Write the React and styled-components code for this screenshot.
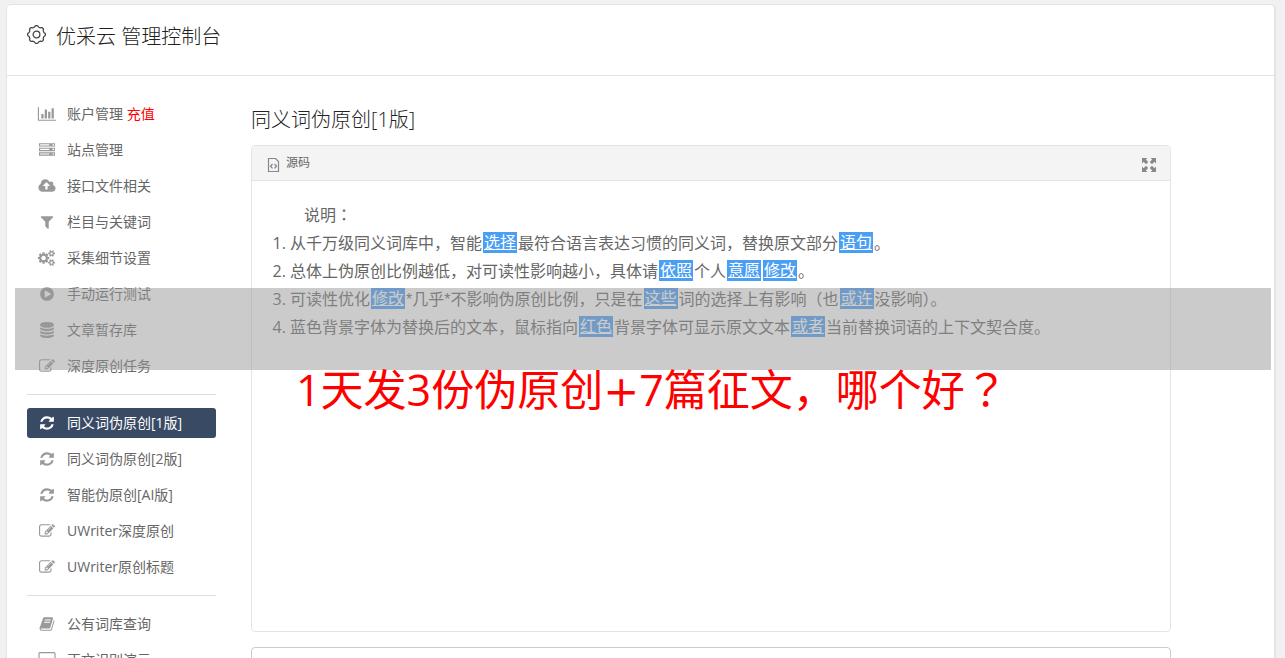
import React from 'react';
import styled, { createGlobalStyle, css } from 'styled-components';

const GlobalStyle = createGlobalStyle`
  * { box-sizing: border-box; }
  body {
    margin: 0;
    background: #f1f1f1;
    color: #666;
    font-family: "Open Sans", "Noto Sans CJK SC", sans-serif;
    font-size: 14px;
  }
`;

const Page = styled.div`
  position: relative;
  height: 100vh;
  overflow: hidden;
  padding: 4px 9px 0 6px;
`;

const Card = styled.div`
  min-height: 100vh;
  background: #fff;
  border: 1px solid #e4e4e4;
  border-right-width: 2px;
  border-radius: 5px;
`;

const Header = styled.header`
  display: flex;
  align-items: flex-start;
  gap: 10px;
  height: 71px;
  padding: 16px 20px 0;
  border-bottom: 1px solid #e4e4e4;

  svg { margin-top: 4px; }
`;

const Brand = styled.h1`
  margin: 0;
  font-size: 20px;
  font-weight: 300;
  line-height: 32px;
  color: #222;
`;

const Columns = styled.div`
  display: flex;
  align-items: flex-start;
  gap: 35px;
  padding: 23px 20px 0;
`;

const Sidebar = styled.nav`
  flex: 0 0 189px;
`;

const Group = styled.ul`
  display: flex;
  flex-direction: column;
  gap: 6px;
  margin: 0;
  padding: 0 0 13px;
  list-style: none;

  & + & {
    padding-top: 13px;
    border-top: 1px solid #ddd;
  }
`;

const NavLink = styled.a`
  display: flex;
  align-items: center;
  gap: 10px;
  height: 30px;
  padding: 0 10px;
  border-radius: 3px;
  color: #666;
  line-height: 30px;
  text-decoration: none;
  white-space: nowrap;

  svg { flex: none; color: #999; }

  ${({ $active }) => $active && css`
    background: #394a65;
    color: #fff;
    svg { color: #fff; }
  `}
`;

const Recharge = styled.span`
  color: #f00;
`;

const Main = styled.main`
  flex: 1;
  min-width: 0;
  max-width: 920px;
`;

const Title = styled.h2`
  margin: 5px 0 9px;
  font-size: 20px;
  font-weight: 300;
  line-height: 32px;
  color: #222;
`;

const Panel = styled.section`
  border: 1px solid #e4e4e4;
  border-radius: 4px;
  margin-bottom: 15px;
`;

const Toolbar = styled.div`
  display: flex;
  align-items: center;
  justify-content: space-between;
  height: 35px;
  padding: 0 13px 0 15px;
  background: #f4f4f4;
  border-bottom: 1px solid #e4e4e4;
  border-radius: 3px 3px 0 0;
`;

const ToolButton = styled.button`
  display: flex;
  align-items: center;
  gap: 6px;
  padding: 0;
  border: 0;
  background: none;
  color: #666;
  font: inherit;
  font-size: 12px;
  line-height: 18px;

  svg { color: #888; margin-top: 3px; }
`;

const Editor = styled.div`
  min-height: 450px;
  padding: 20px;
  font-size: 16px;
  line-height: 28px;
`;

const Lead = styled.p`
  margin: 0;
  text-indent: 2em;
`;

const Notes = styled.ol`
  margin: 0;
  padding-left: 18px;
`;

const fonts = {
  star: '"Liberation Sans", sans-serif',
  plus: '"DejaVu Sans", sans-serif',
  mark: '"Noto Sans CJK JP", sans-serif',
};

const Sign = styled.span`
  font-family: ${({ $kind }) => fonts[$kind]};
  line-height: 1;
`;

const Mark = styled.span`
  display: inline-block;
  height: 21px;
  margin: 3px 1px 0;
  padding: 0 1px;
  background: #4a9ff5;
  color: #fff;
  line-height: 21px;
  text-decoration: underline;
  vertical-align: top;
`;

const Output = styled.textarea`
  display: block;
  width: 100%;
  height: 120px;
  padding: 10px;
  border: 1px solid #ccc;
  border-radius: 4px;
  resize: none;
`;

const Shade = styled.div`
  position: absolute;
  top: 288px;
  left: 15px;
  right: 14px;
  height: 82px;
  background: rgba(151, 151, 151, 0.5);
  pointer-events: none;
`;

const Caption = styled.p`
  position: absolute;
  top: 360px;
  left: 296px;
  margin: 0;
  color: #f00;
  font-size: 43px;
  line-height: 60px;
  white-space: nowrap;
`;

const glyphs = {
  chart: [2048, 'M640 896v512h-256v-512h256zm384-512v1024h-256v-1024h256zm1024 1152v128h-2048v-1536h128v1408h1920zm-640-896v768h-256v-768h256zm384-384v1152h-256v-1152h256z'],
  server: [1792, 'M128 1408h1024v-128h-1024v128zm0-512h1024v-128h-1024v128zm1568 448q0-40-28-68t-68-28-68 28-28 68 28 68 68 28 68-28 28-68zm-1568-960h1024v-128h-1024v128zm1568 448q0-40-28-68t-68-28-68 28-28 68 28 68 68 28 68-28 28-68zm0-512q0-40-28-68t-68-28-68 28-28 68 28 68 68 28 68-28 28-68zm96 832v384h-1792v-384h1792zm0-512v384h-1792v-384h1792zm0-512v384h-1792v-384h1792z'],
  upload: [1920, 'M1280 864q0-14-9-23l-352-352q-9-9-23-9t-23 9l-351 351q-10 12-10 24 0 14 9 23t23 9h224v352q0 13 9.5 22.5t22.5 9.5h192q13 0 22.5-9.5t9.5-22.5v-352h224q13 0 22.5-9.5t9.5-22.5zm640 288q0 159-112.5 271.5t-271.5 112.5h-1088q-185 0-316.5-131.5t-131.5-316.5q0-130 70-240t188-165q-2-30-2-43 0-212 150-362t362-150q156 0 285.5 87t188.5 231q71-62 166-62 106 0 181 75t75 181q0 76-41 138 130 31 213.5 135.5t83.5 238.5z'],
  filter: [1792, 'M1595 295q17 41-14 70l-493 493v742q0 42-39 59-13 5-25 5-27 0-45-19l-256-256q-19-19-19-45v-486l-493-493q-31-29-14-70 17-39 59-39h1280q42 0 59 39z'],
  cogs: [1920, 'M832 896q0-106-75-181t-181-75-181 75-75 181 75 181 181 75 181-75 75-181zm768 512q0-52-38-90t-90-38-90 38-38 90q0 53 37.5 90.5t90.5 37.5 90.5-37.5 37.5-90.5zm0-1024q0-52-38-90t-90-38-90 38-38 90q0 53 37.5 90.5t90.5 37.5 90.5-37.5 37.5-90.5zm-384 421v185q0 10-7 19.5t-16 10.5l-155 24q-11 35-32 76 34 48 90 115 7 11 7 20 0 12-7 19-23 30-82.5 89.5t-78.5 59.5q-11 0-21-7l-115-90q-37 19-77 31-11 108-23 155-7 24-30 24h-186q-11 0-20-7.5t-10-17.5l-23-153q-34-10-75-31l-118 89q-7 7-20 7-11 0-21-8-144-133-144-160 0-9 7-19 10-14 41-53t47-61q-23-44-35-82l-152-24q-10-1-17-9.5t-7-19.5v-185q0-10 7-19.5t16-10.5l155-24q11-35 32-76-34-48-90-115-7-11-7-20 0-12 7-20 22-30 82-89t79-59q11 0 21 7l115 90q34-18 77-32 11-108 23-154 7-24 30-24h186q11 0 20 7.5t10 17.5l23 153q34 10 75 31l118-89q8-7 20-7 11 0 21 8 144 133 144 160 0 8-7 19-12 16-42 54t-45 60q23 48 34 82l152 23q10 2 17 10.5t7 19.5zm640 533v140q0 16-149 31-12 27-30 52 51 113 51 138 0 4-4 7-122 71-124 71-8 0-46-47t-52-68q-20 2-30 2t-30-2q-14 21-52 68t-46 47q-2 0-124-71-4-3-4-7 0-25 51-138-18-25-30-52-149-15-149-31v-140q0-16 149-31 13-29 30-52-51-113-51-138 0-4 4-7 4-2 35-20t59-34 30-16q8 0 46 46.5t52 67.5q20-2 30-2t30 2q51-71 92-112l6-2q4 0 124 70 4 3 4 7 0 25-51 138 17 23 30 52 149 15 149 31zm0-1024v140q0 16-149 31-12 27-30 52 51 113 51 138 0 4-4 7-122 71-124 71-8 0-46-47t-52-68q-20 2-30 2t-30-2q-14 21-52 68t-46 47q-2 0-124-71-4-3-4-7 0-25 51-138-18-25-30-52-149-15-149-31v-140q0-16 149-31 13-29 30-52-51-113-51-138 0-4 4-7 4-2 35-20t59-34 30-16q8 0 46 46.5t52 67.5q20-2 30-2t30 2q51-71 92-112l6-2q4 0 124 70 4 3 4 7 0 25-51 138 17 23 30 52 149 15 149 31z'],
  play: [1792, 'M896 128q209 0 385.5 103t279.5 279.5 103 385.5-103 385.5-279.5 279.5-385.5 103-385.5-103-279.5-279.5-103-385.5 103-385.5 279.5-279.5 385.5-103zm384 823q32-18 32-55t-32-55l-544-320q-31-19-64-1-32 19-32 56v640q0 37 32 56 16 8 32 8 17 0 32-9z'],
  database: [1792, 'M896 768q237 0 443-43t325-127v170q0 69-103 128t-280 93.5-385 34.5-385-34.5-280-93.5-103-128v-170q119 84 325 127t443 43zm0 768q237 0 443-43t325-127v170q0 69-103 128t-280 93.5-385 34.5-385-34.5-280-93.5-103-128v-170q119 84 325 127t443 43zm0-384q237 0 443-43t325-127v170q0 69-103 128t-280 93.5-385 34.5-385-34.5-280-93.5-103-128v-170q119 84 325 127t443 43zm0-1152q208 0 385 34.5t280 93.5 103 128v128q0 69-103 128t-280 93.5-385 34.5-385-34.5-280-93.5-103-128v-128q0-69 103-128t280-93.5 385-34.5z'],
  edit: [1792, 'M888 1184l116-116-152-152-116 116v56h96v96h56zm440-720q-16-16-33 1l-350 350q-17 17-1 33t33-1l350-350q17-17 1-33zm80 594v190q0 119-84.5 203.5t-203.5 84.5h-832q-119 0-203.5-84.5t-84.5-203.5v-832q0-119 84.5-203.5t203.5-84.5h832q63 0 117 25 15 7 18 23 3 17-9 29l-49 49q-14 14-32 8-23-6-45-6h-832q-66 0-113 47t-47 113v832q0 66 47 113t113 47h832q66 0 113-47t47-113v-126q0-13 9-22l64-64q15-15 35-7t20 29zm-96-738l288 288-672 672h-288v-288zm444 132l-92 92-288-288 92-92q28-28 68-28t68 28l152 152q28 28 28 68t-28 68z'],
  refresh: [1792, 'M1639 1056q0 5-1 7-64 268-268 434.5t-478 166.5q-146 0-282.5-55t-243.5-157l-129 129q-19 19-45 19t-45-19-19-45v-448q0-26 19-45t45-19h448q26 0 45 19t19 45-19 45l-137 137q71 66 161 102t187 36q134 0 250-65t186-179q11-17 53-117 8-23 30-23h192q13 0 22.5 9.5t9.5 22.5zm25-800v448q0 26-19 45t-45 19h-448q-26 0-45-19t-19-45 19-45l138-138q-148-137-349-137-134 0-250 65t-186 179q-11 17-53 117-8 23-30 23h-199q-13 0-22.5-9.5t-9.5-22.5v-7q65-268 270-434.5t480-166.5q146 0 284 55.5t245 156.5l130-129q19-19 45-19t45 19 19 45z'],
  book: [1792, 'M1703 478q40 57 18 129l-275 906q-19 64-76.5 107.5t-122.5 43.5h-923q-77 0-148.5-53.5t-99.5-131.5q-24-67-2-127 0-4 3-27t4-37q1-8-3-21.5t-3-19.5q2-11 8-21t16.5-23.5 16.5-23.5q23-38 45-91.5t30-91.5q3-10 .5-30t-.5-28q3-11 17-28t17-23q21-36 42-92t25-90q1-9-2.5-32t.5-28q4-13 22-30.5t22-22.5q19-26 42.5-84.5t27.5-96.5q1-8-3-25.5t-2-26.5q2-8 9-18t18-23 17-21q8-12 16.5-30.5t15-35 16-36 19.5-32 26.5-23.5 36-11.5 47.5 5.5l-1 3q38-9 51-9h761q74 0 114 56t18 130l-274 906q-36 119-71.5 153.5t-128.5 34.5h-869q-27 0-38 15-11 16-1 43 24 70 144 70h923q29 0 56-15.5t35-41.5l300-987q7-22 5-57 38 15 59 43zm-1064 2q-4 13 2 22.5t20 9.5h608q13 0 25.5-9.5t16.5-22.5l21-64q4-13-2-22.5t-20-9.5h-608q-13 0-25.5 9.5t-16.5 22.5zm-83 256q-4 13 2 22.5t20 9.5h608q13 0 25.5-9.5t16.5-22.5l21-64q4-13-2-22.5t-20-9.5h-608q-13 0-25.5 9.5t-16.5 22.5z'],
  desktop: [1920, 'M1792 992v-832q0-13-9.5-22.5t-22.5-9.5h-1600q-13 0-22.5 9.5t-9.5 22.5v832q0 13 9.5 22.5t22.5 9.5h1600q13 0 22.5-9.5t9.5-22.5zm128-832v1088q0 66-47 113t-113 47h-544q0 37 16 77.5t32 71 16 43.5q0 26-19 45t-45 19h-512q-26 0-45-19t-19-45q0-14 16-44t32-70 16-78h-544q-66 0-113-47t-47-113v-1088q0-66 47-113t113-47h1600q66 0 113 47t47 113z'],
};

function Glyph({ name }) {
  const [width, d] = glyphs[name];
  return (
    <svg width="20" height="16" viewBox={`${(width - 2240) / 2} 0 2240 1792`} fill="currentColor" aria-hidden="true">
      <path d={d} />
    </svg>
  );
}

// Eight rounded teeth around the hub.
const gearOutline = Array.from({ length: 97 }, (_, i) => {
  const angle = (i / 96) * Math.PI * 2;
  const radius = 7.8 + 0.6 * Math.tanh(2 * Math.cos(angle * 8));
  const x = 9 + radius * Math.cos(angle);
  const y = 9 + radius * Math.sin(angle);
  return `${i ? 'L' : 'M'}${x.toFixed(2)} ${y.toFixed(2)}`;
}).join('');

const GearIcon = () => (
  <svg width="19" height="19" viewBox="0 0 18 18" fill="none" stroke="#444" strokeWidth="1.2" aria-hidden="true">
    <path d={`${gearOutline}Z`} />
    <circle cx="9" cy="9" r="3.2" />
  </svg>
);

const SourceIcon = () => (
  <svg width="13" height="14" viewBox="0 0 13 14" fill="none" stroke="currentColor" aria-hidden="true">
    <path d="M1.5 .5H8.5L11.5 3.5V13.5H1.5Z" strokeWidth="1.2" />
    <path d="M5.5 6L3.5 8.2L5.5 10.4M7.5 6L9.5 8.2L7.5 10.4" strokeWidth="1.3" />
  </svg>
);

const ExpandIcon = () => (
  <svg width="16" height="16" viewBox="0 0 16 16" fill="currentColor" aria-hidden="true">
    {[0, 90, 180, 270].map((turn) => (
      <path key={turn} transform={`rotate(${turn} 8 8)`} d="M1 1H6.4L4.8 2.6L7.2 5L5 7.2L2.6 4.8L1 6.4Z" />
    ))}
  </svg>
);

const groups = [
  [
    ['chart', '账户管理'],
    ['server', '站点管理'],
    ['upload', '接口文件相关'],
    ['filter', '栏目与关键词'],
    ['cogs', '采集细节设置'],
    ['play', '手动运行测试'],
    ['database', '文章暂存库'],
    ['edit', '深度原创任务'],
  ],
  [
    ['refresh', '同义词伪原创[1版]'],
    ['refresh', '同义词伪原创[2版]'],
    ['refresh', '智能伪原创[AI版]'],
    ['edit', 'UWriter深度原创'],
    ['edit', 'UWriter原创标题'],
  ],
  [
    ['book', '公有词库查询'],
    ['desktop', '正文识别演示'],
  ],
];

export default function App() {
  return (
    <Page>
      <GlobalStyle />
      <Card>
        <Header>
          <GearIcon />
          <Brand>优采云 管理控制台</Brand>
        </Header>
        <Columns>
          <Sidebar>
            {groups.map((items, index) => (
              <Group key={index}>
                {items.map(([icon, label]) => (
                  <li key={label}>
                    <NavLink href="#" $active={label === '同义词伪原创[1版]'}>
                      <Glyph name={icon} />
                      <span>
                        {label}
                        {icon === 'chart' && <Recharge> 充值</Recharge>}
                      </span>
                    </NavLink>
                  </li>
                ))}
              </Group>
            ))}
          </Sidebar>
          <Main>
            <Title>同义词伪原创[1版]</Title>
            <Panel>
              <Toolbar>
                <ToolButton type="button"><SourceIcon />源码</ToolButton>
                <ToolButton type="button" aria-label="全屏"><ExpandIcon /></ToolButton>
              </Toolbar>
              <Editor>
                <Lead>说明<Sign $kind="mark">：</Sign></Lead>
                <Notes>
                  <li>从千万级同义词库中，智能<Mark>选择</Mark>最符合语言表达习惯的同义词，替换原文部分<Mark>语句</Mark>。</li>
                  <li>总体上伪原创比例越低，对可读性影响越小，具体请<Mark>依照</Mark>个人<Mark>意愿</Mark><Mark>修改</Mark>。</li>
                  <li>可读性优化<Mark>修改</Mark><Sign $kind="star">*</Sign>几乎<Sign $kind="star">*</Sign>不影响伪原创比例，只是在<Mark>这些</Mark>词的选择上有影响（也<Mark>或许</Mark>没影响）。</li>
                  <li>蓝色背景字体为替换后的文本，鼠标指向<Mark>红色</Mark>背景字体可显示原文文本<Mark>或者</Mark>当前替换词语的上下文契合度。</li>
                </Notes>
              </Editor>
            </Panel>
            <Output aria-label="结果" />
          </Main>
        </Columns>
      </Card>
      <Shade />
      <Caption>1天发3份伪原创<Sign $kind="plus">+</Sign>7篇征文，哪个好<Sign $kind="mark">？</Sign></Caption>
    </Page>
  );
}
